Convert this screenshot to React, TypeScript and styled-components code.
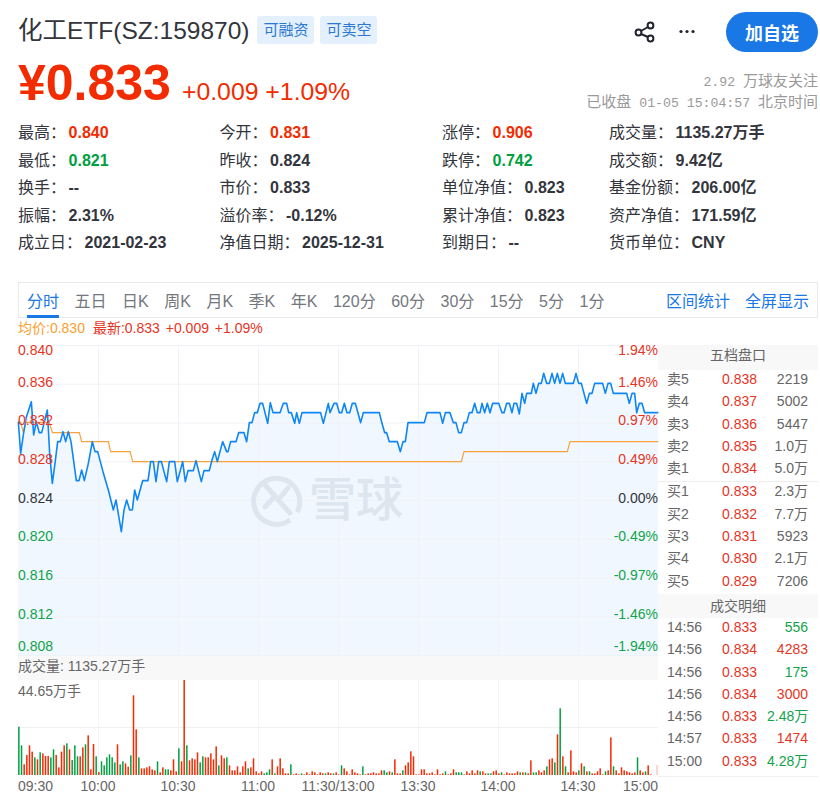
import { FC } from "react";
import styled, { createGlobalStyle } from "styled-components";

const RED = "#f22b00";
const GREEN = "#00a041";
const AXIS_RED = "#e5351f";
const AXIS_GREEN = "#10a44a";
const INK = "#33353c";
const BLUE = "#1a78e6";

const GlobalStyle = createGlobalStyle`
  html, body {
    margin: 0;
    padding: 0;
    background: #fff;
  }
  body {
    font-family: "Liberation Sans", "Noto Sans CJK SC", sans-serif;
    color: ${INK};
  }
`;

const Page = styled.div`
  width: 800px;
  height: 799px;
  padding-left: 18px;
  overflow: hidden;
`;

const TitleRow = styled.div`
  display: flex;
  align-items: center;
  height: 40px;
  padding-top: 10px;
`;

const Title = styled.h1`
  margin: 0 8px 4px 0;
  font-size: 24.5px;
  font-weight: 400;
  color: ${INK};
`;

const Badge = styled.span`
  width: 57px;
  height: 28px;
  margin-right: 6px;
  border-radius: 3px;
  background: #e4f0fd;
  color: #2a78d2;
  font-size: 15px;
  line-height: 28px;
  text-align: center;
`;

const Actions = styled.div`
  display: flex;
  align-items: center;
  margin-left: auto;
  margin-top: 3px;
`;

const MoreSvg = styled.svg`
  margin-left: 18px;
`;

const AddButton = styled.button`
  width: 92px;
  height: 40px;
  margin-left: 27px;
  border: 0;
  border-radius: 20px;
  background: ${BLUE};
  color: #fff;
  font-family: inherit;
  font-size: 18px;
  font-weight: 700;
  padding: 0;
`;

const PriceRow = styled.div`
  display: flex;
  align-items: baseline;
  height: 58px;
  margin-top: 8px;
`;

const Price = styled.span`
  font-size: 50px;
  font-weight: 700;
  line-height: 50px;
  color: ${RED};
`;

const Change = styled.span`
  margin-left: 11px;
  font-size: 24.8px;
  color: ${RED};
`;

const Meta = styled.div`
  margin-left: auto;
  margin-top: 9px;
  text-align: right;
  align-self: center;
  font-size: 15px;
  line-height: 19px;
  color: #9a9a9a;
`;

const Mono = styled.span`
  font-family: "Liberation Mono", monospace;
  font-size: 13.2px;
`;

const Stats = styled.div`
  display: grid;
  grid-template-columns: 201.5px 222.5px 167px 1fr;
  grid-template-rows: 28px 27px 28px 27px 27px;
  margin-top: 3px;
`;

const Stat = styled.div`
  font-size: 16px;
  line-height: 27px;
  color: ${INK};
  white-space: nowrap;
`;

const StatValue = styled.b<{ $tone?: "up" | "down" }>`
  margin-left: 2.5px;
  font-weight: 700;
  color: ${(p) => (p.$tone === "up" ? RED : p.$tone === "down" ? GREEN : INK)};
`;

const TabBar = styled.div`
  display: flex;
  align-items: flex-start;
  height: 34px;
  margin-top: 26px;
  padding: 0 8px 0 8px;
  border: 1px solid #e9e9e9;
  font-size: 16px;
`;

const Tab = styled.span<{ $active?: boolean }>`
  height: 32px;
  margin-right: 15.5px;
  line-height: 37px;
  color: ${(p) => (p.$active ? BLUE : "#74777d")};
  border-bottom: 3px solid ${(p) => (p.$active ? BLUE : "transparent")};
  white-space: nowrap;
`;

const TabLink = styled.span`
  margin-left: 15px;
  line-height: 37px;
  color: ${BLUE};
  white-space: nowrap;
`;

const TabLinks = styled.div`
  display: flex;
  margin-left: auto;
`;

const Legend = styled.div`
  display: flex;
  height: 27px;
  font-size: 14px;
  line-height: 21px;
  word-spacing: 2px;
`;

const LegendItem = styled.span<{ $color: string }>`
  margin-right: 8px;
  color: ${(p) => p.$color};
`;

const ChartRow = styled.div`
  display: flex;
  align-items: flex-start;
`;

const ChartColumn = styled.div`
  width: 640px;
  flex: none;
`;

const ChartSvg = styled.svg`
  display: block;
  overflow: visible;
  font-family: "Liberation Sans", "Noto Sans CJK SC", sans-serif;
`;

const VolumeHeader = styled.div`
  height: 25px;
  background: #f8f8f8;
  color: #666;
  font-size: 14px;
  line-height: 22px;
`;

const Panel = styled.div`
  width: 160px;
  height: 431px;
  border-bottom: 1px solid #f0f0f0;
`;

const PanelTitle = styled.div`
  height: 25px;
  background: #f8f8f8;
  color: #666;
  font-size: 14px;
  line-height: 21px;
  text-align: center;
`;

const TradeTitle = styled(PanelTitle)`
  height: 24px;
  line-height: 24px;
`;

const PanelGroup = styled.div<{ $divider?: boolean }>`
  border-top: ${(p) => (p.$divider ? "1px solid #eee" : "0")};
`;

const PanelRow = styled.div`
  display: grid;
  grid-template-columns: 55px 45px 41px;
  padding-left: 9px;
  height: 22.3px;
  font-size: 14px;
  line-height: 18px;
  color: #666;
`;

const PanelPrice = styled.span`
  color: ${AXIS_RED};
`;

const PanelQty = styled.span<{ $color?: string }>`
  text-align: right;
  white-space: nowrap;
  color: ${(p) => p.$color ?? "#666"};
`;

// pixel traces of the intraday lines, at 3x, x offset from the page's left edge, y from 340
const BLUE_TRACE =
  "55,245 62,340 70,285 78,235 94,185 101,285 109,245 118,278 125,278 142,210 149,340 157,430 165,370 173,305 181,305 189,275 197,305 205,275 213,305 229,422 237,422 245,390 253,422 265,370 277,305 285,335 293,335 309,395 325,450 340,510 348,480 364,575 372,510 380,480 389,510 397,510 404,450 412,480 428,422 444,422 452,365 460,365 468,425 476,365 484,365 500,425 508,365 524,365 532,425 548,365 556,425 564,392 580,392 588,362 604,425 612,392 628,392 636,360 644,335 652,365 668,305 680,335 684,335 692,305 708,305 716,278 732,278 740,305 748,248 756,248 764,218 772,218 780,190 788,190 803,250 811,188 819,218 840,218 850,190 860,190 866,218 874,218 884,250 890,218 898,250 906,218 962,218 970,250 985,190 990,218 " +
  "12,190 20,190 28,218 35,218 43,190 51,218 59,218 67,190 76,190 92,248 100,218 148,218 156,250 164,278 170,278 178,305 202,305 211,335 219,305 226,305 234,248 283,248 291,218 330,218 338,250 346,218 360,218 370,248 378,248 386,278 394,278 402,248 410,248 418,218 426,218 434,190 442,218 450,218 456,190 464,218 472,190 480,218 488,190 506,190 516,218 522,218 530,190 538,190 546,218 552,190 560,190 568,222 576,160 584,190 590,160 604,160 610,130 618,160 626,130 634,130 641,100 650,130 658,130 666,100 674,130 682,100 690,130 698,100 706,130 730,130 738,100 746,130 754,130 770,190 778,160 786,160 794,130 818,130 826,160 834,130 842,130 850,160 890,160 898,190 906,160 914,160 920,218 928,190 936,190 944,218 985,218"
    .split(" ")
    .map((p) => {
      const [x, y] = p.split(",").map(Number);
      return `${x + 990},${y}`;
    })
    .join(" ");

const ORANGE_TRACE =
  "55,247 62,247 70,278 78,247 148,247 157,278 238,278 245,305 325,305 332,335 390,335 398,365 1384,365 1392,335 1702,335 1710,305 1975,305";

// page-space point list -> chart-space point list
const toChart = (trace: string) =>
  trace.split(" ").map((p) => {
    const [x, y] = p.split(",").map(Number);
    return [x / 3 - 18, y / 3 + 340 - 345] as const;
  });

const VOLUME =
  "g260 g316 r373 r345 r316 r335 g352 r358 g337 r340 r348 r348 g352 g328 r345 r382 r335 r316 g310 r328 g360 g316 g349 r349 r322 g313 r286 r388 r312 g349 r396 g364 g376 g352 g343 g352 g367 r313 g373 g364 r370 r380 g346 r166 r268 g352 r385 r385 r382 r379 r388 r391 g364 r397 r382 g388 g388 r391 r358 r394 g325 r364 r120 g316 r361 r355 r358 r337 g367 g349 r352 r352 r340 r358 r319 g376 r346 r355 g352 r376 r391 r391 r379 r397 r379 r364 g385 r382 r355 r394 r400 r394 g400 g397 g388 r358 g400 r379 r355 r385 r400 r400 g373 r403 r400 r403 g400 r403 r397 r403 r394 r397 r403 r397 r400 g400 r397 r400 " +
  "g400 r397 r403 g376 r385 r394 r403 r388 r397 r400 r403 g379 r403 r400 r400 r397 r400 r400 r391 g391 g397 r394 g397 r358 r400 r400 g391 r376 r367 r334 r349 r403 r403 r388 r388 r400 r400 r397 r403 r388 r403 r400 g394 r403 r400 r388 g397 g397 g397 r403 r394 r400 r391 r400 r391 g394 r394 r400 g400 g400 r394 r391 r400 g397 r403 r397 r400 r400 r400 r394 g397 r397 g397 r400 r361 g397 g397 r391 r397 r391 g379 r358 r355 g367 r283 g205 r349 g379 r397 r331 r394 r397 g391 r370 g379 r394 g394 r400 r400 r394 r385 r403 g394 r391 r292 g379 r391 r400 r382 r391 r394 r397 r400 r397 g352 r391 r397 g394 r376 r403";

const LEFT_AXIS: [string, string][] = [
  ["0.840", AXIS_RED],
  ["0.836", AXIS_RED],
  ["0.832", AXIS_RED],
  ["0.828", AXIS_RED],
  ["0.824", INK],
  ["0.820", AXIS_GREEN],
  ["0.816", AXIS_GREEN],
  ["0.812", AXIS_GREEN],
  ["0.808", AXIS_GREEN],
];

const RIGHT_AXIS = ["1.94%", "1.46%", "0.97%", "0.49%", "0.00%", "-0.49%", "-0.97%", "-1.46%", "-1.94%"];
const AXIS_Y = [10, 42, 80, 119, 158, 196, 235, 274, 306];

const PriceChart: FC = () => {
  const blue = toChart(BLUE_TRACE);
  const orange = toChart(ORANGE_TRACE);
  const line = blue.map(([x, y]) => `${x},${y}`).join(" ");
  const area = `0,310 ${line} 640,${blue[blue.length - 1][1]} 640,310`;
  return (
    <ChartSvg width={640} height={310} viewBox="0 0 640 310">
      <polygon points={area} fill="#f0f7fe" />
      {[0, 1, 2, 3, 4, 5, 6, 7, 8].map((i) => (
        <line key={`h${i}`} x1={0} x2={640} y1={i * 38.75 + 0.5} y2={i * 38.75 + 0.5} stroke="#eff2f6" />
      ))}
      {[1, 2, 3, 4, 5, 6, 7].map((i) => (
        <line key={`v${i}`} x1={i * 80 + 0.5} x2={i * 80 + 0.5} y1={0} y2={310} stroke="#eff2f6" />
      ))}
      <g fill="none" stroke="#dde5ef" strokeWidth={5} transform="translate(-18 -345)">
        <path d="M290 520 A23 23 0 1 1 297 512" />
        <path d="M265 485 L275 496 L265 507" strokeLinecap="round" strokeLinejoin="round" />
        <path d="M288 488 L278 500 L290 513" strokeLinecap="round" strokeLinejoin="round" />
      </g>
      <text x={291} y={171} fontSize={47} fontWeight={500} fill="#dde5ef">
        雪球
      </text>
      <polyline points={orange.map(([x, y]) => `${x},${y}`).join(" ")} fill="none" stroke="#f9a13c" strokeWidth={1.2} />
      <polyline points={line} fill="none" stroke="#0f86f5" strokeWidth={1.6} strokeLinejoin="round" />
      {LEFT_AXIS.map(([label, color], i) => (
        <text key={label} x={0} y={AXIS_Y[i]} fontSize={14} fill={color}>
          {label}
        </text>
      ))}
      {RIGHT_AXIS.map((label, i) => (
        <text key={label} x={640} y={AXIS_Y[i]} fontSize={14} textAnchor="end" fill={LEFT_AXIS[i][1]}>
          {label}
        </text>
      ))}
    </ChartSvg>
  );
};

const TIME_LABELS = ["10:00", "10:30", "11:00", "11:30/13:00", "13:30", "14:00", "14:30"];

const VolumeChart: FC = () => {
  const bars = VOLUME.split(" ").map((b, i) => ({
    color: b[0] === "g" ? "#00a041" : "#f52a00",
    top: Number(b.slice(1)) / 3 + 640 - 680,
    x: (i * 8) / 3 + 0.1,
  }));
  return (
    <ChartSvg width={640} height={119} viewBox="0 0 640 119">
      <line x1={0} x2={640} y1={47.5} y2={47.5} stroke="#f0f0f0" />
      {[1, 2, 3, 4, 5, 6, 7].map((i) => (
        <line key={i} x1={i * 80 + 0.5} x2={i * 80 + 0.5} y1={0} y2={95} stroke="#f3f3f3" />
      ))}
      {bars.map((b) => (
        <rect key={b.x} x={b.x} y={b.top} width={1.5} height={95 - b.top} fill={b.color} />
      ))}
      <rect x={638} y={85} width={2} height={10} fill="#fcd6d0" />
      <text x={0} y={16} fontSize={14} fill="#666">
        44.65万手
      </text>
      <text x={0} y={111} fontSize={14} fill="#666">
        09:30
      </text>
      {TIME_LABELS.map((t, i) => (
        <text key={t} x={(i + 1) * 80} y={111} fontSize={14} fill="#666" textAnchor="middle">
          {t}
        </text>
      ))}
      <text x={640} y={111} fontSize={14} fill="#666" textAnchor="end">
        15:00
      </text>
    </ChartSvg>
  );
};

const STATS: [string, string, ("up" | "down")?][] = [
  ["最高", "0.840", "up"],
  ["今开", "0.831", "up"],
  ["涨停", "0.906", "up"],
  ["成交量", "1135.27万手"],
  ["最低", "0.821", "down"],
  ["昨收", "0.824"],
  ["跌停", "0.742", "down"],
  ["成交额", "9.42亿"],
  ["换手", "--"],
  ["市价", "0.833"],
  ["单位净值", "0.823"],
  ["基金份额", "206.00亿"],
  ["振幅", "2.31%"],
  ["溢价率", "-0.12%"],
  ["累计净值", "0.823"],
  ["资产净值", "171.59亿"],
  ["成立日", "2021-02-23"],
  ["净值日期", "2025-12-31"],
  ["到期日", "--"],
  ["货币单位", "CNY"],
];

const TABS = ["分时", "五日", "日K", "周K", "月K", "季K", "年K", "120分", "60分", "30分", "15分", "5分", "1分"];

const ASKS = [
  ["卖5", "0.838", "2219"],
  ["卖4", "0.837", "5002"],
  ["卖3", "0.836", "5447"],
  ["卖2", "0.835", "1.0万"],
  ["卖1", "0.834", "5.0万"],
];

const BIDS = [
  ["买1", "0.833", "2.3万"],
  ["买2", "0.832", "7.7万"],
  ["买3", "0.831", "5923"],
  ["买4", "0.830", "2.1万"],
  ["买5", "0.829", "7206"],
];

const TRADES: [string, string, string, boolean][] = [
  ["14:56", "0.833", "556", false],
  ["14:56", "0.834", "4283", true],
  ["14:56", "0.833", "175", false],
  ["14:56", "0.834", "3000", true],
  ["14:56", "0.833", "2.48万", false],
  ["14:57", "0.833", "1474", true],
  ["15:00", "0.833", "4.28万", false],
];

const ShareIcon: FC = () => (
  <svg width={24} height={24} viewBox="0 0 24 24" fill="none" stroke="#1f2430" strokeWidth={2}>
    <circle cx={17.5} cy={5.5} r={2.9} />
    <circle cx={5.5} cy={12.5} r={2.9} />
    <circle cx={17.5} cy={18.5} r={2.9} />
    <path d="M8 11 L15 7 M8 14 L15 17" />
  </svg>
);

const MoreIcon: FC = () => (
  <MoreSvg width={24} height={24} viewBox="0 0 24 24" fill="#1f2430">
    <circle cx={6} cy={11.5} r={1.6} />
    <circle cx={12} cy={11.5} r={1.6} />
    <circle cx={18} cy={11.5} r={1.6} />
  </MoreSvg>
);

const App: FC = () => (
  <Page>
    <GlobalStyle />
    <TitleRow>
      <Title>化工ETF(SZ:159870)</Title>
      <Badge>可融资</Badge>
      <Badge>可卖空</Badge>
      <Actions>
        <ShareIcon />
        <MoreIcon />
        <AddButton>加自选</AddButton>
      </Actions>
    </TitleRow>
    <PriceRow>
      <Price>¥0.833</Price>
      <Change>+0.009 +1.09%</Change>
      <Meta>
        <div>
          <Mono>2.92 </Mono>万球友关注
        </div>
        <div>
          已收盘<Mono> 01-05 15:04:57 </Mono>北京时间
        </div>
      </Meta>
    </PriceRow>
    <Stats>
      {STATS.map(([label, value, tone]) => (
        <Stat key={label}>
          {label}：<StatValue $tone={tone}>{value}</StatValue>
        </Stat>
      ))}
    </Stats>
    <TabBar>
      {TABS.map((t, i) => (
        <Tab key={t} $active={i === 0}>
          {t}
        </Tab>
      ))}
      <TabLinks>
        <TabLink>区间统计</TabLink>
        <TabLink>全屏显示</TabLink>
      </TabLinks>
    </TabBar>
    <Legend>
      <LegendItem $color="#f7a130">均价:0.830</LegendItem>
      <LegendItem $color={AXIS_RED}>最新:0.833 +0.009 +1.09%</LegendItem>
    </Legend>
    <ChartRow>
      <ChartColumn>
        <PriceChart />
        <VolumeHeader>成交量: 1135.27万手</VolumeHeader>
        <VolumeChart />
      </ChartColumn>
      <Panel>
        <PanelTitle>五档盘口</PanelTitle>
        <PanelGroup>
          {ASKS.map(([a, b, c]) => (
            <PanelRow key={a}>
              <span>{a}</span>
              <PanelPrice>{b}</PanelPrice>
              <PanelQty>{c}</PanelQty>
            </PanelRow>
          ))}
        </PanelGroup>
        <PanelGroup $divider>
          {BIDS.map(([a, b, c]) => (
            <PanelRow key={a}>
              <span>{a}</span>
              <PanelPrice>{b}</PanelPrice>
              <PanelQty>{c}</PanelQty>
            </PanelRow>
          ))}
        </PanelGroup>
        <TradeTitle>成交明细</TradeTitle>
        <PanelGroup>
          {TRADES.map(([time, price, qty, up], i) => (
            <PanelRow key={i}>
              <span>{time}</span>
              <PanelPrice>{price}</PanelPrice>
              <PanelQty $color={up ? AXIS_RED : AXIS_GREEN}>{qty}</PanelQty>
            </PanelRow>
          ))}
        </PanelGroup>
      </Panel>
    </ChartRow>
  </Page>
);

export default App;
